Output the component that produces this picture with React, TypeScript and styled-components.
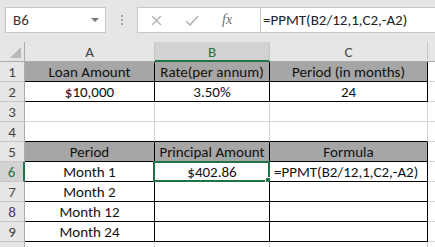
import React from 'react';
import styled, { createGlobalStyle } from 'styled-components';

const GlobalStyle = createGlobalStyle`
  html, body {
    margin: 0;
    padding: 0;
    background: #ffffff;
    overflow: hidden;
  }
  body {
    font-family: Carlito, Lato, "Liberation Sans", sans-serif;
  }
`;

const GREEN = '#217346';

const Window = styled.div`
  width: 435px;
  height: 247px;
  overflow: hidden;
  background: #ffffff;
`;

const FormulaBar = styled.div`
  height: 42px;
  background: #e6e6e6;
  display: flex;
  align-items: flex-start;
  padding: 7px 0 0 5px;
  box-sizing: border-box;
`;

const NameBox = styled.div`
  width: 101px;
  height: 26px;
  box-sizing: border-box;
  background: #fff;
  border: 1px solid #c6c6c6;
  display: flex;
  align-items: center;
  justify-content: space-between;
  padding: 0 6px 0 7px;
  font-size: 15px;
  color: #333;
`;

const DropArrow = styled.span`
  width: 0;
  height: 0;
  border-left: 4px solid transparent;
  border-right: 4px solid transparent;
  border-top: 4px solid #777;
`;

const Grip = styled.div`
  width: 31px;
  height: 26px;
  display: flex;
  flex-direction: column;
  align-items: center;
  justify-content: center;
  gap: 2px;
  span {
    width: 2px;
    height: 2px;
    background: #a6a6a6;
  }
`;

const ButtonsBox = styled.div`
  width: 124px;
  height: 26px;
  box-sizing: border-box;
  background: #fff;
  border: 1px solid #c6c6c6;
  display: flex;
  align-items: center;
  padding-left: 13px;
  gap: 23px;
`;

const Fx = styled.span`
  font-family: "Liberation Serif", serif;
  font-style: italic;
  font-size: 14px;
  color: #6f6f6f;
`;

const FormulaInput = styled.div`
  flex: 1;
  height: 26px;
  box-sizing: border-box;
  background: #fff;
  border: 1px solid #c6c6c6;
  border-left: none;
  border-right: none;
  display: flex;
  align-items: center;
  padding-left: 2px;
  font-size: 15px;
  color: #222;
  white-space: nowrap;
`;

const Grid = styled.div`
  display: grid;
  grid-template-columns: 25px 130px 115px 158px 1fr;
  grid-auto-rows: 20px;
  font-size: 15px;
`;

const Corner = styled.div`
  background: #e6e6e6;
  border-right: 1px solid #ababab;
  border-bottom: 1px solid #ababab;
  box-sizing: border-box;
  position: relative;
  &::after {
    content: '';
    position: absolute;
    right: 3px;
    bottom: 3px;
    width: 0;
    height: 0;
    border-left: 11px solid transparent;
    border-bottom: 11px solid #b9b9b9;
  }
`;

const ColHead = styled.div<{ $sel?: boolean }>`
  background: ${(p) => (p.$sel ? '#d2d2d2' : '#e6e6e6')};
  color: ${(p) => (p.$sel ? GREEN : '#444')};
  border-right: 1px solid #c6c6c6;
  border-bottom: ${(p) => (p.$sel ? `2px solid ${GREEN}` : '1px solid #ababab')};
  box-sizing: border-box;
  display: flex;
  align-items: center;
  justify-content: center;
  padding-top: 1px;
`;

const RowHead = styled.div<{ $sel?: boolean }>`
  background: ${(p) => (p.$sel ? '#d2d2d2' : '#e6e6e6')};
  color: ${(p) => (p.$sel ? GREEN : '#444')};
  border-right: ${(p) => (p.$sel ? `2px solid ${GREEN}` : '1px solid #ababab')};
  border-bottom: 1px solid #c8c8c8;
  box-sizing: border-box;
  display: flex;
  align-items: center;
  justify-content: center;
`;

const Cell = styled.div<{
  $fill?: boolean;
  $right?: string;
  $bottom?: string;
  $align?: string;
}>`
  position: relative;
  background: ${(p) => (p.$fill ? '#a6a6a6' : '#ffffff')};
  border-right: 1px solid ${(p) => p.$right || '#d4d4d4'};
  border-bottom: 1px solid ${(p) => p.$bottom || '#d4d4d4'};
  box-sizing: border-box;
  display: flex;
  align-items: center;
  justify-content: ${(p) => p.$align || 'center'};
  padding: 0 4px;
  color: #111;
  white-space: nowrap;
  overflow: visible;
`;

const Selection = styled.div`
  position: absolute;
  left: -2px;
  top: -1px;
  right: -1px;
  bottom: -1px;
  border: 2px solid ${GREEN};
  pointer-events: none;
  &::after {
    content: '';
    position: absolute;
    right: -4px;
    bottom: -4px;
    width: 5px;
    height: 5px;
    background: ${GREEN};
    border: 1px solid #fff;
  }
`;

type RowData = {
  cells: string[];
  fill?: boolean;
  boxed?: boolean;
  topBoxed?: boolean;
  hideNum?: boolean;
};

const rows: RowData[] = [
  { cells: ['Loan Amount', 'Rate(per annum)', 'Period (in months)'], fill: true, boxed: true },
  { cells: ['$10,000', '3.50%', '24'], boxed: true },
  { cells: ['', '', ''] },
  { cells: ['', '', ''], topBoxed: true },
  { cells: ['Period', 'Principal Amount', 'Formula'], fill: true, boxed: true },
  { cells: ['Month 1', '$402.86', '=PPMT(B2/12,1,C2,-A2)'], boxed: true },
  { cells: ['Month 2', '', ''], boxed: true },
  { cells: ['Month 12', '', ''], boxed: true },
  { cells: ['Month 24', '', ''], boxed: true },
  { cells: ['', '', ''], hideNum: true },
];

const App = () => {
  return (
    <Window>
      <GlobalStyle />
      <FormulaBar>
        <NameBox>
          B6
          <DropArrow />
        </NameBox>
        <Grip>
          <span />
          <span />
          <span />
        </Grip>
        <ButtonsBox>
          <svg width="11" height="11" viewBox="0 0 11 11">
            <path d="M1 1 L10 10 M10 1 L1 10" stroke="#b4b4b4" strokeWidth="1.4" fill="none" />
          </svg>
          <svg width="14" height="11" viewBox="0 0 14 11">
            <path d="M1 6 L5 10 L13 1" stroke="#b4b4b4" strokeWidth="1.6" fill="none" />
          </svg>
          <Fx>fx</Fx>
        </ButtonsBox>
        <FormulaInput>=PPMT(B2/12,1,C2,-A2)</FormulaInput>
      </FormulaBar>
      <Grid>
        <Corner />
        <ColHead>A</ColHead>
        <ColHead $sel>B</ColHead>
        <ColHead>C</ColHead>
        <ColHead />
        {rows.map((r, i) => {
          const n = i + 1;
          const line = r.boxed ? '#000' : undefined;
          const bottom = r.boxed || r.topBoxed ? '#000' : undefined;
          return (
            <React.Fragment key={n}>
              <RowHead $sel={n === 6}>{r.hideNum ? '' : n}</RowHead>
              {r.cells.map((c, j) => (
                <Cell
                  key={j}
                  $fill={r.fill}
                  $right={line}
                  $bottom={bottom}
                  $align={n === 6 && j === 2 ? 'flex-start' : 'center'}
                >
                  {c}
                  {n === 6 && j === 1 && <Selection />}
                </Cell>
              ))}
              <Cell />
            </React.Fragment>
          );
        })}
      </Grid>
    </Window>
  );
};

export default App;
